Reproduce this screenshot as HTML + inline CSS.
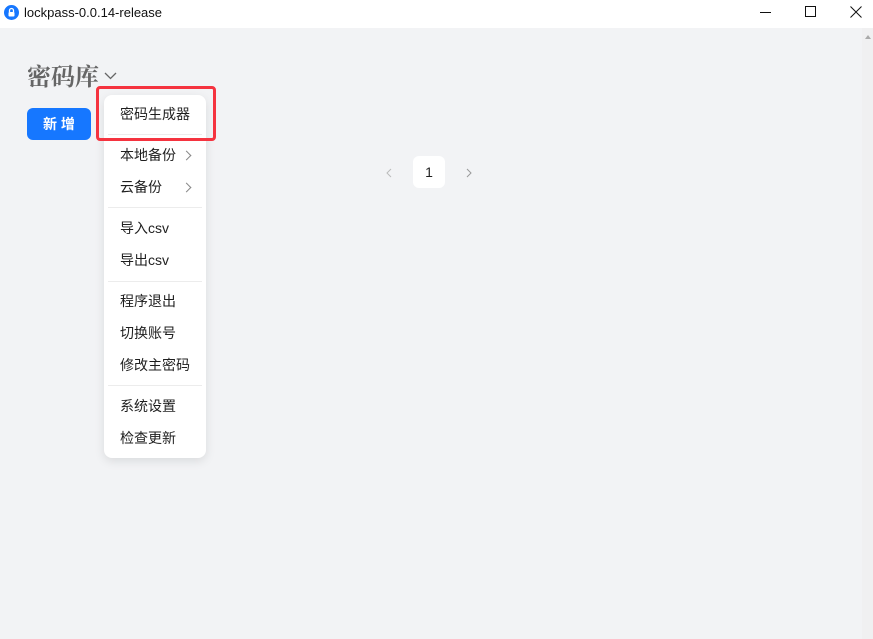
<!DOCTYPE html><html><head><style>
body{margin:0;width:873px;height:639px;overflow:hidden;background:#f2f3f5;font-family:"Liberation Sans","Noto Sans CJK SC",sans-serif;position:relative}
.tb{position:absolute;top:0;left:0;width:873px;height:28px;background:#fff}
.abs{position:absolute}
.mi{position:absolute;left:120px;font-size:14px;color:#1f1f1f;line-height:20px}
.dv{position:absolute;left:108px;width:94px;height:1px;background:#ececec}
.ar{position:absolute;left:183px;width:6px;height:6px;border-right:1px solid #888;border-top:1px solid #888;transform:rotate(45deg)}
</style></head><body>
<div class="tb"></div>
<svg class="abs" style="left:4px;top:5px" width="15" height="15"><circle cx="7.5" cy="7.5" r="7.5" fill="#1677ff"/><rect x="4.5" y="7" width="6" height="4.5" rx="1" fill="#fff"/><path d="M5.5 7V5.5a2 2 0 0 1 4 0V7" stroke="#fff" stroke-width="1.3" fill="none"/></svg>
<div class="abs" style="left:24px;top:5px;font-size:13px;color:#111">lockpass-0.0.14-release</div>
<div class="abs" style="left:760px;top:12px;width:11px;height:1px;background:#111"></div>
<div class="abs" style="left:805px;top:6px;width:9px;height:9px;border:1px solid #111"></div>
<svg class="abs" style="left:850px;top:6px" width="12" height="12"><path d="M0.5 0.5L11.5 11.5M11.5 0.5L0.5 11.5" stroke="#111"/></svg>
<div class="abs" style="left:862px;top:28px;width:11px;height:611px;background:#f0f0f1"></div>
<div class="abs" style="left:865px;top:35px;width:0;height:0;border-left:3px solid transparent;border-right:3px solid transparent;border-bottom:4px solid #aaa"></div>
<div class="abs" style="left:27px;top:60px;font-size:24px;line-height:30px;color:#666;font-family:'Noto Serif CJK SC',serif;font-weight:bold">密码库</div>
<svg class="abs" style="left:104px;top:71px" width="14" height="10"><path d="M1 2L6.5 7.5L12 2" stroke="#666" stroke-width="1.3" fill="none"/></svg>
<div class="abs" style="left:27px;top:108px;width:64px;height:32px;background:#1677ff;border-radius:6px;color:#fff;font-size:14px;line-height:32px;text-align:center;font-weight:bold">新 增</div>
<div class="abs" style="left:104px;top:95px;width:102px;height:363px;background:#fff;border-radius:8px;box-shadow:0 3px 10px rgba(0,0,0,.1)"></div>
<div class="abs" style="left:96px;top:86px;width:114px;height:49px;border:3px solid #f5333f;border-radius:4px"></div>
<div class="mi" style="top:104px">密码生成器</div>
<div class="dv" style="top:134px"></div>
<div class="mi" style="top:145px">本地备份</div><div class="ar" style="top:152px"></div>
<div class="mi" style="top:177px">云备份</div><div class="ar" style="top:184px"></div>
<div class="dv" style="top:207px"></div>
<div class="mi" style="top:218px">导入csv</div>
<div class="mi" style="top:250px">导出csv</div>
<div class="dv" style="top:281px"></div>
<div class="mi" style="top:291px">程序退出</div>
<div class="mi" style="top:323px">切换账号</div>
<div class="mi" style="top:355px">修改主密码</div>
<div class="dv" style="top:385px"></div>
<div class="mi" style="top:396px">系统设置</div>
<div class="mi" style="top:428px">检查更新</div>
<div class="abs" style="left:413px;top:156px;width:32px;height:32px;background:#fff;border-radius:6px;font-size:14px;line-height:32px;text-align:center;color:#1f1f1f">1</div>
<svg class="abs" style="left:385px;top:168px" width="8" height="10"><path d="M6 1L2 5L6 9" stroke="#bbb" fill="none"/></svg>
<svg class="abs" style="left:465px;top:168px" width="8" height="10"><path d="M2 1L6 5L2 9" stroke="#999" fill="none"/></svg>
</body></html>
